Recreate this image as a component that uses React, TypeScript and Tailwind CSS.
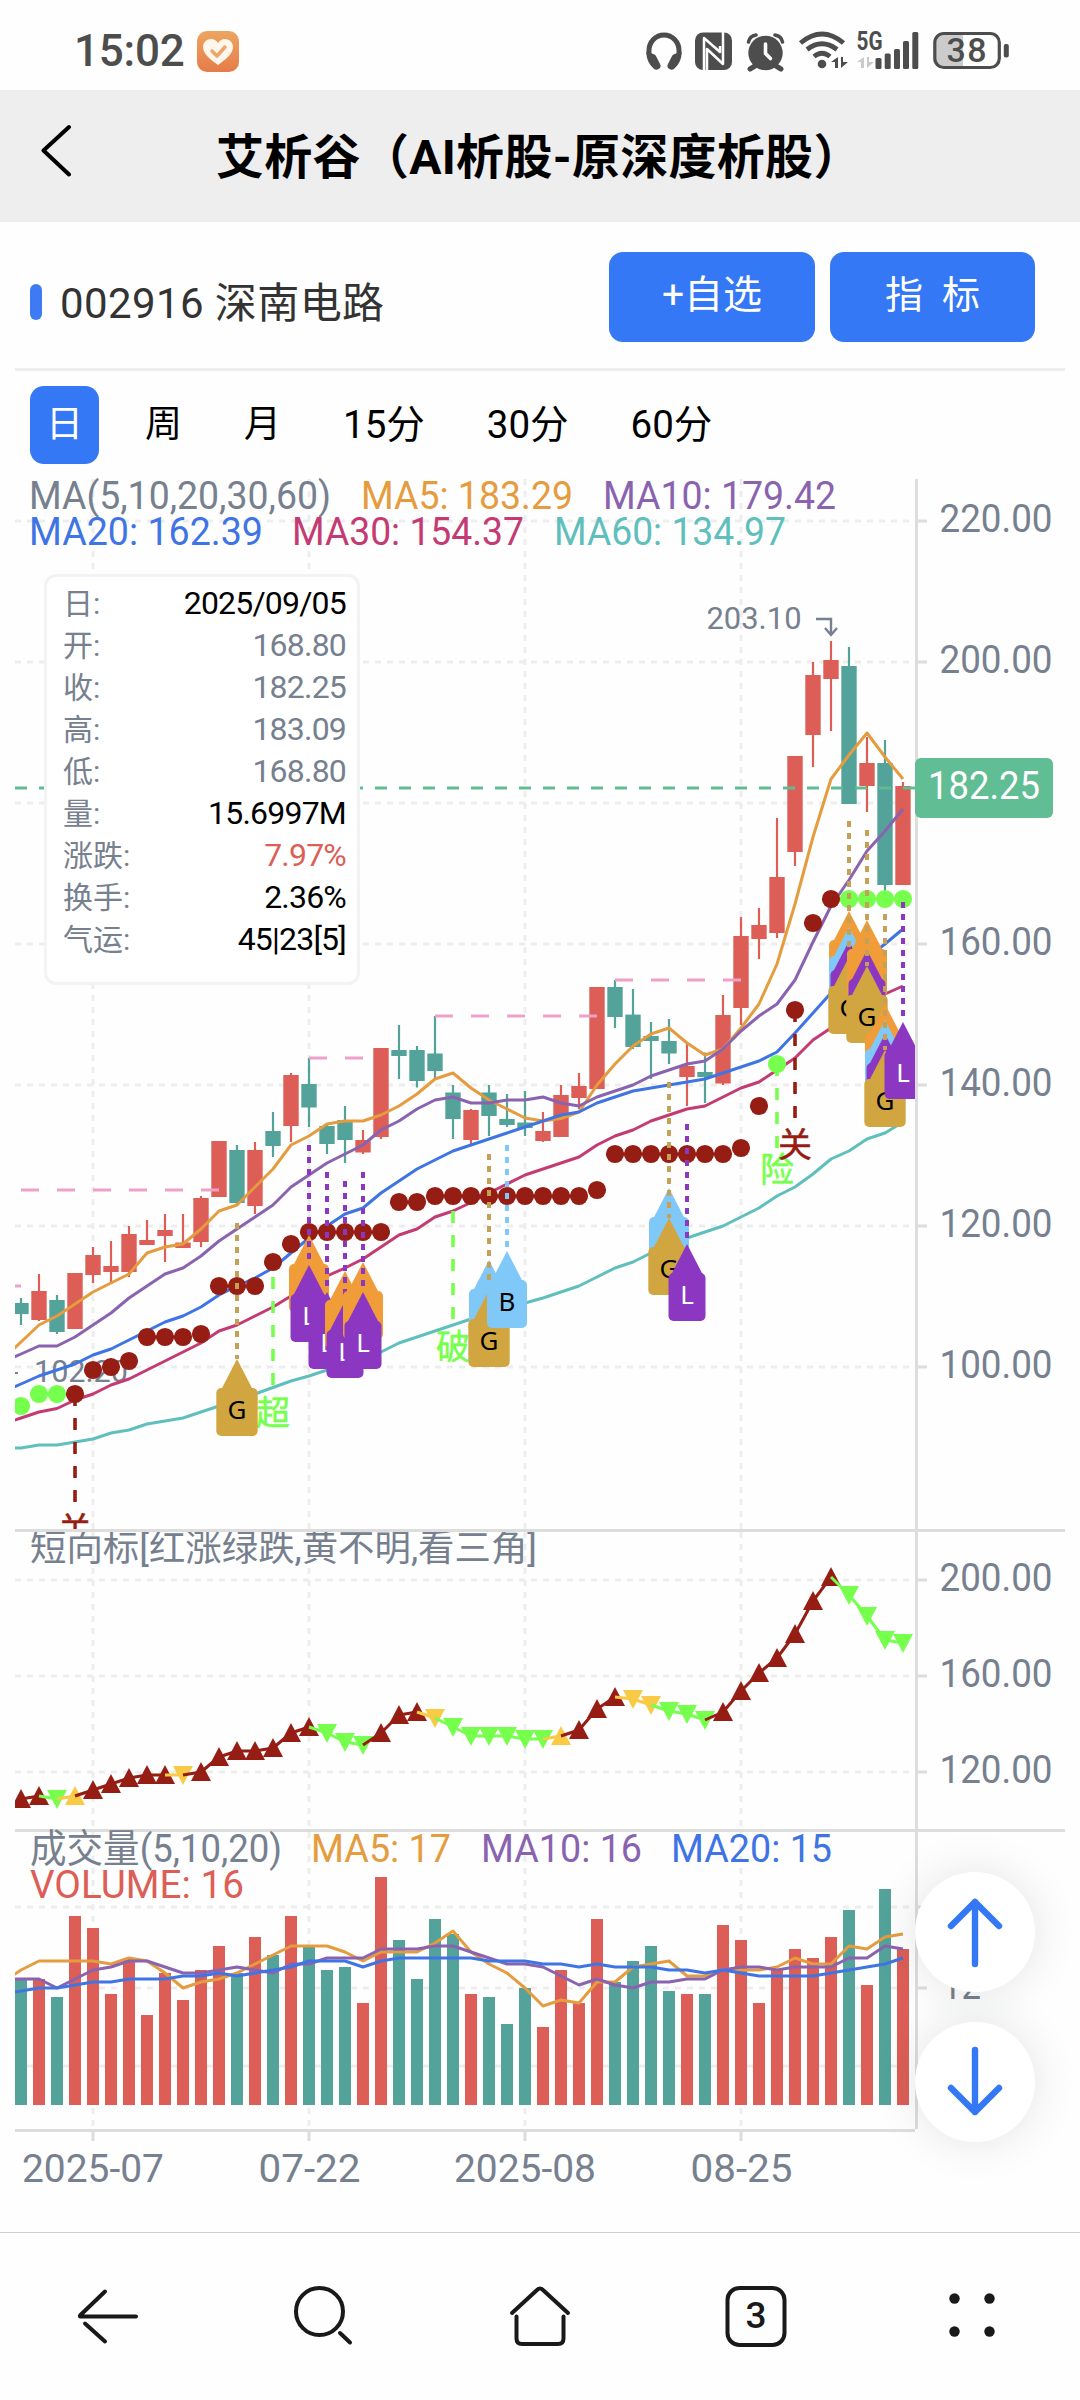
import type { ReactNode } from 'react';

const UP = '#dd5e56';
const DOWN = '#53a39a';
const DARK_RED = '#951d13';
const LIME = '#76ff4c';
const AMBER = '#f8ca46';
const GOLD = '#d1a641';
const SKY = '#80c8f8';
const PURPLE = '#8b37c2';
const ORANGE = '#f09c38';
const AXIS = '#dddddd';
const GRID = '#ededed';
const LABEL = '#76808f';

const STEP = 18;
const cx = (i: number) => 21 + STEP * i;

type Candle = [dir: 'u' | 'd', high: number, top: number, bottom: number, low: number];

// y positions on the main panel: high, body top, body bottom, low
const CANDLES: Candle[] = [
  ['d', 1298, 1303, 1314, 1325], ['u', 1274, 1291, 1320, 1321], ['d', 1295, 1300, 1332, 1334], ['u', 1273, 1273, 1329, 1329],
  ['u', 1247, 1255, 1275, 1283], ['u', 1241, 1266, 1272, 1282], ['u', 1226, 1234, 1272, 1277], ['u', 1220, 1240, 1245, 1245],
  ['u', 1214, 1230, 1236, 1262], ['u', 1214, 1242.5, 1248, 1248], ['u', 1196, 1198, 1242, 1247], ['u', 1141, 1141, 1197, 1197],
  ['d', 1145, 1150, 1203, 1204], ['u', 1142, 1150, 1206, 1214], ['d', 1112, 1131, 1146, 1157], ['u', 1073, 1075, 1126, 1142],
  ['d', 1058, 1084, 1107.5, 1127], ['d', 1125, 1126, 1144, 1154], ['d', 1106, 1120, 1140, 1163], ['u', 1130, 1140, 1152.5, 1154],
  ['u', 1048, 1048, 1137, 1139], ['d', 1025, 1050, 1056, 1079], ['d', 1046, 1050, 1081, 1087.5], ['d', 1016, 1053.5, 1071, 1079],
  ['d', 1085, 1092.5, 1119, 1139], ['u', 1109, 1110, 1140, 1144], ['d', 1085, 1092.5, 1116, 1136], ['d', 1094, 1119, 1125, 1127],
  ['d', 1091, 1122.5, 1128, 1136], ['u', 1112, 1131, 1141, 1142], ['u', 1085, 1095, 1137, 1137], ['u', 1073, 1086, 1098, 1109],
  ['u', 987, 987, 1089, 1089], ['d', 980, 987, 1017, 1028], ['d', 989, 1014.6, 1047, 1049], ['d', 1022, 1036, 1041, 1079],
  ['d', 1019, 1041, 1053.5, 1064], ['u', 1044, 1066, 1077, 1106], ['d', 1052.5, 1072, 1077, 1103], ['u', 995, 1015, 1083.5, 1085],
  ['u', 917, 936, 1008, 1025], ['u', 908, 925, 939, 959], ['u', 818, 877, 933, 938], ['u', 756, 756, 852, 866],
  ['u', 662, 675, 735, 767], ['u', 641, 660, 679, 731], ['d', 647, 666, 804, 804], ['u', 737, 763, 786, 812],
  ['d', 740, 763, 885, 893], ['u', 782, 786, 885, 885],
];

// every series starts one bar left of the visible range
const MA_LINES = [
  { color: '#e59c3f', ys: [1359, 1342, 1325, 1316, 1304, 1292, 1283, 1274, 1253, 1247, 1244, 1229, 1211, 1205, 1187, 1169, 1145, 1136, 1124, 1121, 1121, 1115, 1106, 1094, 1079, 1073, 1088, 1100, 1109, 1118, 1121, 1118.5, 1112, 1085, 1064, 1046, 1034, 1028, 1043, 1055, 1049, 1028, 1004, 964, 904, 837, 779, 755, 733, 757, 779] },
  { color: '#8a63b0', ys: [1362, 1354, 1346, 1346, 1337, 1325, 1313, 1298, 1286, 1274, 1268, 1256, 1241, 1229, 1217, 1205, 1187, 1175, 1163, 1154, 1145, 1130, 1121, 1109, 1100, 1097, 1103, 1103, 1100, 1100, 1097, 1103, 1106, 1097, 1091, 1085, 1076, 1070, 1064, 1061, 1049, 1031, 1016, 1004, 980, 942, 906, 880, 851, 831, 809] },
  { color: '#3e74e4', ys: [1392, 1384, 1376, 1370, 1364, 1355, 1349, 1340, 1331, 1322, 1316, 1307, 1295, 1286, 1278, 1268, 1253, 1238, 1226, 1214, 1208, 1193, 1181, 1169, 1160, 1151, 1145, 1139, 1133, 1127, 1121, 1115, 1112, 1103, 1097, 1091, 1088, 1085, 1082, 1079, 1073, 1067, 1061, 1052, 1033, 1013, 993, 975, 958, 944, 929] },
  { color: '#c33b72', ys: [1424, 1418, 1412, 1408.5, 1400, 1394, 1385, 1379, 1370, 1361, 1352, 1343, 1331, 1325, 1316, 1307, 1296, 1286, 1276, 1268, 1259, 1247, 1235, 1229, 1217, 1211, 1202.5, 1193, 1184, 1175, 1169, 1163, 1157, 1145, 1136, 1130, 1121, 1115, 1109, 1106, 1097, 1088, 1082, 1070, 1058, 1040, 1028, 1018, 1006, 994, 986] },
  { color: '#5fbfbd', ys: [1448, 1448, 1445, 1445, 1442, 1439, 1433, 1430, 1424, 1421, 1418, 1412, 1406, 1400, 1394, 1387.5, 1381, 1376, 1370, 1364, 1358, 1352, 1343, 1337, 1331, 1325, 1319, 1312, 1307, 1303, 1298, 1292, 1286, 1277, 1268, 1262, 1253, 1247, 1238, 1232, 1226, 1217, 1208, 1196, 1187, 1174, 1159, 1151, 1139, 1133, 1122] },
];

const DOTS = [
  1406, 1394, 1394, 1394, 1370, 1367, 1361, 1337, 1337, 1337, 1334, 1286, 1286, 1286, 1262, 1244, 1232, 1232, 1232, 1232, 1232,
  1202, 1202, 1196, 1196, 1196, 1196, 1196, 1196, 1196, 1196, 1196, 1190, 1154, 1154, 1154, 1154, 1154, 1154, 1154, 1148,
  1106, 1064, 1010, 923, 899, 899, 899, 899, 899,
];
const LIME_DOTS = [0, 1, 2, 42, 46, 47, 48, 49];

const PRESSURE = [
  [15, 21, 1286], [21, 219, 1190], [309, 381, 1058], [435, 597, 1016], [615, 741, 980],
];

type Signal = { i: number; y: number; kind: 'G' | 'L' | 'B'; behind?: string[] };

const SIGNALS: Signal[] = [
  { i: 12, y: 1223, kind: 'G' },
  { i: 16, y: 1145, kind: 'L', behind: [ORANGE] },
  { i: 17, y: 1172, kind: 'L' },
  { i: 18, y: 1181, kind: 'L', behind: [ORANGE] },
  { i: 19, y: 1172, kind: 'L', behind: [ORANGE] },
  { i: 26, y: 1154, kind: 'G', behind: [SKY] },
  { i: 27, y: 1145, kind: 'B' },
  { i: 36, y: 1082, kind: 'G', behind: [SKY] },
  { i: 37, y: 1124, kind: 'L' },
  { i: 46, y: 821, kind: 'G', behind: [ORANGE, SKY, PURPLE] },
  { i: 47, y: 830, kind: 'G', behind: [ORANGE, PURPLE] },
  { i: 48, y: 914, kind: 'G', behind: [ORANGE, SKY, PURPLE] },
  { i: 49, y: 902, kind: 'L' },
];

const PIN_OFFSET: Record<string, number> = { [ORANGE]: 90, [SKY]: 106, [PURPLE]: 120, [GOLD]: 136 };
const PIN_HALF: Record<string, number> = { [ORANGE]: 20, [SKY]: 20, [PURPLE]: 18.5, [GOLD]: 20.7 };
const KIND_COLOR = { G: GOLD, L: PURPLE, B: SKY };

const NOTES = [
  { i: 3, from: 1394, to: 1502, base: 1542, text: '关', color: DARK_RED },
  { i: 14, from: 1277, to: 1385, base: 1425, text: '超', color: LIME },
  { i: 24, from: 1211, to: 1319, base: 1359, text: '破', color: LIME },
  { i: 42, from: 1064, to: 1148, base: 1182, text: '险', color: LIME },
  { i: 43, from: 1010, to: 1118, base: 1157, text: '关', color: DARK_RED },
];

// R: rising, G: falling, Y/y: undecided pointing up / down
const TREND_KINDS = 'RRGYRRRRRyRRRRRRRGGGRRRyGGGGGGYRRRyyGGGRRRRRRRGGGG';
const TREND = [
  1799, 1796, 1799, 1796, 1790, 1784, 1778, 1775, 1775, 1775, 1772, 1757, 1751, 1751, 1748, 1733, 1727, 1733, 1742, 1745, 1733, 1715, 1712, 1718, 1727,
  1736, 1736, 1736, 1739, 1739, 1736, 1730, 1709, 1697, 1699, 1705, 1711, 1714, 1720, 1712, 1691, 1673, 1658, 1634, 1601, 1577, 1595, 1616, 1640, 1643,
];
const TREND_COLOR: Record<string, string> = { R: DARK_RED, G: LIME, Y: AMBER, y: AMBER };

const VOLUME_DOWN = [0, 2, 12, 14, 16, 17, 18, 21, 22, 23, 24, 26, 27, 28, 33, 34, 35, 36, 38, 46, 48];
const VOLUME = [
  1979, 1979, 1997, 1916, 1928, 1994, 1958, 2015, 1973, 2000, 1970, 1946, 1973, 1937, 1955, 1916, 1946, 1970, 1967, 2003, 1877, 1940, 1979, 1919, 1934,
  1994, 1997, 2024, 1988, 2027, 1970, 2003, 1919, 1982, 1961, 1946, 1991, 1994, 1994, 1925, 1940, 2003, 1970, 1949, 1958, 1937, 1910, 1985, 1889, 1949,
];
const VOLUME_LINES = [
  { color: '#e59c3f', ys: [1982, 1970, 1961, 1961, 1961, 1961, 1964, 1958, 1961, 1973, 1988, 1982, 1979, 1973, 1964, 1955, 1946, 1946, 1946, 1952, 1961, 1952, 1952, 1952, 1943, 1931, 1952, 1964, 1973, 1988, 2006, 2000, 2003, 1982, 1982, 1967, 1964, 1961, 1976, 1976, 1970, 1970, 1970, 1967, 1958, 1964, 1964, 1946, 1949, 1937, 1934] },
  { color: '#8a63b0', ys: [1979, 1979, 1979, 1988, 1979, 1970, 1967, 1961, 1961, 1967, 1973, 1973, 1970, 1967, 1970, 1973, 1964, 1964, 1958, 1958, 1958, 1949, 1949, 1949, 1946, 1946, 1952, 1958, 1964, 1964, 1967, 1976, 1985, 1979, 1985, 1988, 1982, 1982, 1979, 1979, 1970, 1967, 1967, 1970, 1967, 1967, 1967, 1958, 1958, 1946, 1949] },
  { color: '#3e74e4', ys: [1994, 1991, 1988, 1988, 1985, 1982, 1982, 1979, 1979, 1979, 1976, 1976, 1973, 1976, 1973, 1970, 1967, 1961, 1961, 1961, 1967, 1961, 1958, 1958, 1958, 1958, 1958, 1961, 1961, 1961, 1964, 1964, 1967, 1964, 1967, 1967, 1967, 1970, 1970, 1973, 1970, 1973, 1976, 1976, 1976, 1976, 1973, 1970, 1967, 1964, 1958] },
];

const AXIS_LABELS: [number, string][] = [
  [521, '220.00'], [662, '200.00'], [944, '160.00'], [1085, '140.00'], [1226, '120.00'], [1367, '100.00'],
  [1580, '200.00'], [1676, '160.00'], [1772, '120.00'],
];
const GRID_ROWS = [521, 662, 803, 944, 1085, 1226, 1367, 1580, 1676, 1772, 1907, 1988, 2066];
const GRID_COLS = [93, 309, 525, 741];

const points = (ys: number[]) => ys.map((y, k) => `${cx(k - 1)},${y}`).join(' ');

type LabelProps = { x: number; y: number; w: number; size?: number; fill?: string; children: string };

function Label({ x, y, w, size = 38.5, fill = LABEL, children }: LabelProps) {
  return (
    <text x={x} y={y} fontSize={size} fill={fill} textLength={w} lengthAdjust="spacingAndGlyphs">
      {children}
    </text>
  );
}

function Pin({ x, top, color }: { x: number; top: number; color: string }) {
  const half = PIN_HALF[color];
  return (
    <g fill={color}>
      <path d={`M${x} ${top}L${x + 16} ${top + 31}H${x - 16}Z`} />
      <rect x={x - half} y={top + 29} width={half * 2} height={48} rx={5} />
    </g>
  );
}

function SignalMark({ i, y, kind, behind = [] }: Signal) {
  const x = cx(i);
  const color = KIND_COLOR[kind];
  const top = y + PIN_OFFSET[color];
  return (
    <g>
      {behind.map((c) => (
        <Pin key={c} x={x} top={y + PIN_OFFSET[c]} color={c} />
      ))}
      <path d={`M${x} ${y}V${top}`} stroke={kind === 'G' ? '#c4a155' : color} strokeWidth="4" strokeDasharray="6 6" />
      <Pin x={x} top={top} color={color} />
      <text
        x={x}
        y={top + 60}
        fontSize="26"
        textAnchor="middle"
        fontFamily="'Noto Sans', 'Open Sans', sans-serif"
        fill={kind === 'L' ? '#fff' : '#000'}
      >
        {kind}
      </text>
    </g>
  );
}

function TrendMark({ i }: { i: number }) {
  const kind = TREND_KINDS[i];
  const color = TREND_COLOR[kind];
  const x = cx(i);
  const y = TREND[i];
  const up = kind === 'R' || kind === 'Y';
  return (
    <g>
      {i > 0 && <path d={`M${cx(i - 1)} ${TREND[i - 1]}L${x} ${y}`} stroke={color} strokeWidth="3" />}
      <path d={up ? `M${x} ${y - 10}l10 19h-20z` : `M${x} ${y + 10}l10 -19h-20z`} fill={color} />
    </g>
  );
}

function Chart() {
  return (
    <svg
      className="block h-[1721px] w-[1050px] overflow-visible"
      viewBox="15 479 1050 1721"
      fontFamily="Roboto, 'Noto Sans CJK SC', sans-serif"
      fill="none"
    >
      <defs>
        <clipPath id="main">
          <rect x="15" y="479" width="900" height="1050" />
        </clipPath>
        <clipPath id="lower">
          <rect x="15" y="1532" width="900" height="600" />
        </clipPath>
      </defs>

      <g stroke={GRID} strokeWidth="3" strokeDasharray="6 6">
        {GRID_ROWS.map((y) => (
          <path key={y} d={`M15 ${y}H915`} />
        ))}
        {GRID_COLS.map((x) => (
          <path key={x} d={`M${x} 479V1529M${x} 1532V1829M${x} 1832V2129`} />
        ))}
      </g>

      <g stroke={AXIS} strokeWidth="3">
        <path d="M15 1530.5H1065M15 1830.5H1065M15 2130.5H915M916.5 479V2129" />
        {GRID_COLS.map((x) => (
          <path key={x} d={`M${x} 2132v9`} />
        ))}
        {[...AXIS_LABELS.map(([y]) => y), 1907, 1988].map((y) => (
          <path key={y} d={`M918 ${y}h9`} />
        ))}
      </g>

      <g clipPath="url(#main)">
        {CANDLES.map(([dir, high, top, bottom, low], i) => {
          const color = dir === 'u' ? UP : DOWN;
          return (
            <g key={i}>
              <path d={`M${cx(i)} ${high}V${low}`} stroke={color} strokeWidth="2.2" />
              <rect x={cx(i) - 7.7} y={top} width={15.4} height={bottom - top} fill={color} />
            </g>
          );
        })}
        <path d="M15 1373h3" stroke={LABEL} strokeWidth="2" />
        <Label x={34} y={1382} w={94} size={31.5}>102.20</Label>
        {MA_LINES.map((l) => (
          <polyline key={l.color} points={points(l.ys)} stroke={l.color} strokeWidth="3" strokeLinejoin="round" />
        ))}
        {PRESSURE.map(([from, to, y]) => (
          <path key={from} d={`M${from} ${y}H${to}`} stroke="#efa0c8" strokeWidth="3" strokeDasharray="18 18" />
        ))}
        {DOTS.map((y, i) => (
          <g key={i}>
            {DOTS[i + 1] === y && <path d={`M${cx(i)} ${y}h18`} stroke={LIME_DOTS.includes(i) ? LIME : DARK_RED} strokeWidth="3" />}
            <circle cx={cx(i)} cy={y} r="9.1" fill={LIME_DOTS.includes(i) ? LIME : DARK_RED} />
          </g>
        ))}
        {NOTES.map((n) => (
          <g key={n.i}>
            <path d={`M${cx(n.i)} ${n.from}V${n.to}`} stroke={n.color} strokeWidth="3.6" strokeDasharray="12 12" />
            <text x={cx(n.i)} y={n.base} fontSize="34" textAnchor="middle" fill={n.color} stroke={n.color} strokeWidth="0.5">{n.text}</text>
          </g>
        ))}
        {SIGNALS.map((s) => (
          <SignalMark key={s.i} {...s} />
        ))}
      </g>

      <path d="M15 788H915" stroke="#61bb92" strokeWidth="3" strokeDasharray="12 12" />
      <rect x="915" y="758" width="138" height="60" rx="6" fill="#61bd93" />
      <Label x={928} y={799} w={112} fill="#fff">182.25</Label>

      <path d="M816 619h15v15m-6 -6l6 7l6 -7" stroke={LABEL} strokeWidth="2.4" />
      <Label x={706.5} y={628.7} w={95} size={31.5}>203.10</Label>

      <Label x={29} y={508.5} w={302}>MA(5,10,20,30,60)</Label>
      <Label x={361} y={508.5} w={212} fill="#e59c3f">MA5: 183.29</Label>
      <Label x={603} y={508.5} w={233} fill="#8a63b0">MA10: 179.42</Label>
      <Label x={29} y={544.5} w={234} fill="#3e74e4">MA20: 162.39</Label>
      <Label x={292} y={544.5} w={232} fill="#c33b72">MA30: 154.37</Label>
      <Label x={554} y={544.5} w={232} fill="#5fbfbd">MA60: 134.97</Label>

      <g clipPath="url(#lower)">
        <Label x={30} y={1561} w={507} size={36}>短向标[红涨绿跌,黄不明,看三角]</Label>
        {TREND.map((_, i) => (
          <TrendMark key={i} i={i} />
        ))}
        {VOLUME.map((y, i) => (
          <rect key={i} x={cx(i) - 6} y={y} width="12" height={2105 - y} fill={VOLUME_DOWN.includes(i) ? DOWN : UP} />
        ))}
        {VOLUME_LINES.map((l) => (
          <polyline key={l.color} points={points(l.ys)} stroke={l.color} strokeWidth="3" strokeLinejoin="round" />
        ))}
      </g>

      <Label x={30} y={1861.5} w={252}>成交量(5,10,20)</Label>
      <Label x={311} y={1861.5} w={140} fill="#e59c3f">MA5: 17</Label>
      <Label x={481} y={1861.5} w={161} fill="#8a63b0">MA10: 16</Label>
      <Label x={671} y={1861.5} w={161} fill="#3e74e4">MA20: 15</Label>
      <Label x={30} y={1897.5} w={214} fill={UP}>VOLUME: 16</Label>

      {AXIS_LABELS.map(([y, t]) => (
        <Label key={y} x={939.5} y={y + 11.3} w={113}>{t}</Label>
      ))}
      <Label x={942} y={1999} w={39}>12</Label>

      <Label x={22} y={2182} w={142}>2025-07</Label>
      <Label x={258.5} y={2182} w={102}>07-22</Label>
      <Label x={454} y={2182} w={142}>2025-08</Label>
      <Label x={690.5} y={2182} w={102}>08-25</Label>
    </svg>
  );
}

const DETAILS = [
  { label: '日:', value: '2025/09/05', tone: 'text-black' },
  { label: '开:', value: '168.80', tone: 'text-[#76808f]' },
  { label: '收:', value: '182.25', tone: 'text-[#76808f]' },
  { label: '高:', value: '183.09', tone: 'text-[#76808f]' },
  { label: '低:', value: '168.80', tone: 'text-[#76808f]' },
  { label: '量:', value: '15.6997M', tone: 'text-black' },
  { label: '涨跌:', value: '7.97%', tone: 'text-[#dd5e56]' },
  { label: '换手:', value: '2.36%', tone: 'text-black' },
  { label: '气运:', value: '45|23[5]', tone: 'text-black' },
];

function DetailCard() {
  return (
    <div className="absolute top-[95px] left-[29px] h-[411px] w-[316px] rounded-xl border-[3px] border-[#f2f3f5] bg-white pt-[5px] pr-[11px] pl-[16px]">
      {DETAILS.map((d) => (
        <div key={d.label} className="flex h-[42px] items-center justify-between">
          <span className="text-[30px] text-[#76808f]">{d.label}</span>
          <span className={`text-[32px] tracking-[-0.8px] ${d.tone}`}>{d.value}</span>
        </div>
      ))}
    </div>
  );
}

function StatusBar() {
  return (
    <div className="flex h-[90px] items-start justify-between pr-[70px] pl-[74px] text-[#4d4d4d]">
      <div className="flex items-start">
        <span className="mt-[26px] w-[123px] text-[44px] leading-[50px] font-medium tracking-[-0.2px]">15:02</span>
        <svg className="mt-[31px] h-[41px] w-[42px]" viewBox="0 0 42 41">
          <defs>
            <linearGradient id="app" x1="0" y1="0" x2="0" y2="1">
              <stop offset="0" stopColor="#eda561" />
              <stop offset="1" stopColor="#e57c49" />
            </linearGradient>
          </defs>
          <rect width="42" height="41" rx="10" fill="url(#app)" />
          <path d="M21 34C14 29 6 23 6 16C6 11 10 8 14 8C17 8 20 10 21 12C22 10 25 8 28 8C32 8 36 11 36 16C36 23 28 29 21 34Z" fill="#fff6ec" />
          <path d="M15 20l5 5l8 -9" fill="none" stroke="#eea56a" strokeWidth="3.4" strokeLinecap="round" strokeLinejoin="round" />
        </svg>
      </div>

      <svg className="mt-[30px] h-[42px] w-[366px] overflow-visible" viewBox="644 30 366 42" fill="currentColor">
        <path d="M651 58C648 54 649 51 649 50.500A15 15.500 0 0 1 679 50.500C679 51 680 54 677 58" fill="none" stroke="currentColor" strokeWidth="5" />
        <path d="M646.500 52l7 2q2 .5 3 3l4 8q.5 1 -.5 3q-3 3 -6 1q-8 -7 -7.500 -17zM681.500 52l-7 2q-2 .5 -3 3l-4 8q-.5 1 .5 3q3 3 6 1q8 -7 7.500 -17z" />

        <rect x="695" y="32.500" width="37" height="37.500" rx="8" />
        <path d="M704 70V38l16 14V46M704 64V38M707 70V49l16 15V32" fill="none" stroke="#fff" strokeWidth="2.500" strokeLinejoin="round" />

        <circle cx="765.500" cy="53" r="17.200" />
        <path d="M755 66l-5 3M776 66l5 3" stroke="currentColor" strokeWidth="5" strokeLinecap="round" />
        <path d="M748.500 42q1 -6 7.500 -7M782.500 42q-1 -6 -7.500 -7" stroke="currentColor" strokeWidth="3.600" strokeLinecap="round" fill="none" />
        <path d="M765.500 44v9.500l5 5" fill="none" stroke="#fff" strokeWidth="3.600" strokeLinecap="round" />

        <g fill="none" stroke="currentColor" strokeWidth="4.800">
          <path d="M800.500 43Q822 25 843.500 43" />
          <path d="M807 49.500Q822 38 837 49.500" />
          <path d="M814 56.500Q822 50 830 56.500" />
        </g>
        <circle cx="822" cy="64" r="4.300" />
        <path d="M838 57v11h-3v-6h-4zM841 68v-11h2v5h5z" />

        <text x="856.500" y="50" fontSize="25" fontWeight="700" textLength="26" lengthAdjust="spacingAndGlyphs" fontFamily="Roboto, sans-serif">5G</text>
        <path d="M864 57v11h-3v-6h-4zM867 68v-11h2v5h5z" fill="#cacaca" />
        <rect x="875.500" y="58" width="6" height="11" rx="1.500" />
        <rect x="884.700" y="53.500" width="6" height="15.500" rx="1.500" />
        <rect x="894" y="49" width="6" height="20" rx="1.500" />
        <rect x="903" y="41" width="6" height="28" rx="1.500" />
        <rect x="912.300" y="32" width="6" height="37" rx="1.500" />

        <path d="M944 34H963V67H944Q935 67 935 58V43Q935 34 944 34Z" fill="#cbcbcb" />
        <rect x="934.800" y="33.500" width="64.500" height="34" rx="9" fill="none" stroke="currentColor" strokeWidth="3.200" />
        <rect x="1003.800" y="44" width="5" height="13.500" rx="2" />
        <text x="946.500" y="62.300" fontSize="34" fontWeight="500" textLength="40" lengthAdjust="spacing" fontFamily="Roboto, sans-serif">38</text>
      </svg>
    </div>
  );
}

function TitleBar() {
  return (
    <header className="flex h-[132px] items-center bg-[#eeeeee]">
      <svg className="mb-[12px] ml-[40px] h-[54px] w-[34px]" viewBox="40 122 34 54" fill="none" stroke="#000" strokeWidth="4">
        <path d="M69 126L43.500 149.500L69 173.500" strokeLinecap="round" strokeLinejoin="round" />
      </svg>
      <h1 className="mt-[4px] ml-[142px] text-[48px] leading-none font-bold tracking-[0.3px] whitespace-nowrap text-black">艾析谷（AI析股-原深度析股）</h1>
    </header>
  );
}

function StockRow() {
  return (
    <div className="flex h-[146px] items-start pt-[30px] pr-[30px] pl-[15px]">
      <span className="mt-[32px] h-[36px] w-[12px] rounded-full bg-[#3f7af5]" />
      <h2 className="mt-[22px] ml-[18px] flex-1 text-[42px] leading-[60px] tracking-[0.4px] text-[#333]">002916 深南电路</h2>
      <button className="h-[90px] w-[206px] rounded-[14px] bg-[#3478f6] pb-[3px] text-[39px] text-white">+自选</button>
      <button className="ml-[15px] h-[90px] w-[205px] rounded-[14px] bg-[#3478f6] pb-[3px] text-[38px] whitespace-pre text-white">指  标</button>
    </div>
  );
}

function PeriodTabs() {
  return (
    <nav className="flex h-[108px] gap-[30px] pt-[15px] pl-[15px] text-[37px] text-black">
      {['日', '周', '月'].map((t, i) => (
        <span
          key={t}
          className={
            i === 0
              ? 'flex h-[78px] items-center rounded-[14px] bg-[#3478f6] px-4 text-white'
              : 'flex h-[78px] items-center px-4'
          }
        >
          {t}
        </span>
      ))}
      {['15分', '30分', '60分'].map((t) => (
        <span key={t} className="flex h-[78px] items-center px-4 text-[38.500px]">
          {t}
        </span>
      ))}
    </nav>
  );
}

function RoundButton({ children }: { children: ReactNode }) {
  return (
    <button className="flex size-[120px] items-center justify-center rounded-full bg-white shadow-[0_0_45px_rgba(30,40,40,0.12)]">
      <svg className="size-[72px]" viewBox="-36 -36 72 72" fill="none" stroke="#3478f6" strokeWidth="6.4" strokeLinecap="round" strokeLinejoin="round">
        {children}
      </svg>
    </button>
  );
}

function BottomNav() {
  return (
    <footer className="mt-[32px] grid h-[168px] grid-cols-5 border-t-[1.5px] border-[#cccccc] text-[#191919]">
      {[
        <path key="b" d="M80 2317H136M80 2316L105 2292M85 2324L105 2342" />,
        <g key="s">
          <circle cx="103.500" cy="2312" r="23.500" />
          <path d="M124 2333.500l10 9.500" />
        </g>,
        <g key="h">
          <path d="M80 2313.500L105 2290.500Q108 2287.500 111 2290.500L136 2313.500" />
          <path d="M84.500 2317V2339Q84.500 2344.500 90 2344.500H126Q131.500 2344.500 131.500 2339V2317" />
        </g>,
        <g key="t">
          <rect x="79.500" y="2288.500" width="57" height="57" rx="12" />
          <text x="108" y="2328" fontSize="37" fontWeight="500" textAnchor="middle" stroke="none" fill="currentColor" fontFamily="Roboto, sans-serif">3</text>
        </g>,
        <g key="m" fill="currentColor" stroke="none">
          <circle cx="90.500" cy="2299" r="5.200" />
          <circle cx="125.500" cy="2299" r="5.200" />
          <circle cx="90.500" cy="2332" r="5.200" />
          <circle cx="125.500" cy="2332" r="5.200" />
        </g>,
      ].map((icon, i) => (
        <svg key={i} className="h-[166px] w-[216px]" viewBox="0 2233.5 216 166" fill="none" stroke="currentColor" strokeWidth="4" strokeLinecap="round">
          {icon}
        </svg>
      ))}
    </footer>
  );
}

export default function App() {
  return (
    <div className="flex h-[2400px] w-[1080px] flex-col overflow-hidden bg-[#fefefe] font-[Roboto,'Noto_Sans_CJK_SC',sans-serif]">
      <StatusBar />
      <TitleBar />
      <main className="px-[15px]">
        <StockRow />
        <div className="h-[3px] bg-[#ededed]" />
        <PeriodTabs />
        <div className="relative">
          <Chart />
          <DetailCard />
          <div className="absolute top-[1393px] left-[900px] flex flex-col gap-[30px]">
            <RoundButton>
              <path d="M0 32V-30M-24 -6L0 -30L24 -6" />
            </RoundButton>
            <RoundButton>
              <path d="M0 -32V30M-24 6L0 30L24 6" />
            </RoundButton>
          </div>
        </div>
      </main>
      <BottomNav />
    </div>
  );
}
